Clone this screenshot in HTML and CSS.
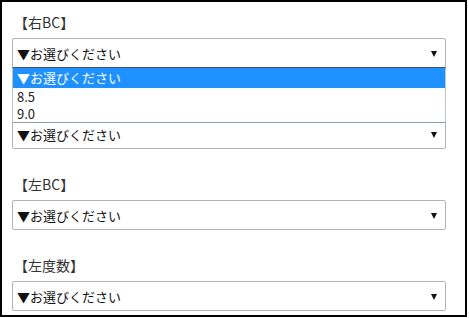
FILE: index.html
```html
<!DOCTYPE html>
<html lang="ja">
<head>
<meta charset="utf-8">
<link rel="stylesheet" href="styles.css">
</head>
<body>
<div class="frame">
  <div class="group">
    <div class="label">【右BC】</div>
    <div class="select-wrap">
      <div class="select"><span class="value">▼お選びください</span><span class="arrow"></span></div>
      <ul class="dropdown">
        <li class="opt selected">▼お選びください</li>
        <li class="opt">8.5</li>
        <li class="opt">9.0</li>
      </ul>
    </div>
  </div>
  <div class="group">
    <div class="label">【右度数】</div>
    <div class="select-wrap">
      <div class="select"><span class="value">▼お選びください</span><span class="arrow"></span></div>
    </div>
  </div>
  <div class="group">
    <div class="label">【左BC】</div>
    <div class="select-wrap">
      <div class="select"><span class="value">▼お選びください</span><span class="arrow"></span></div>
    </div>
  </div>
  <div class="group">
    <div class="label">【左度数】</div>
    <div class="select-wrap">
      <div class="select"><span class="value">▼お選びください</span><span class="arrow"></span></div>
    </div>
  </div>
</div>
</body>
</html>
```

FILE: styles.css
```css
html, body {
  margin: 0;
  padding: 0;
  background: #fff;
}
body {
  font-family: "Noto Sans CJK JP", "Noto Sans", sans-serif;
  color: #222;
}
.frame {
  box-sizing: border-box;
  width: 467px;
  height: 317px;
  border: 2px solid #000;
  padding: 10px 0 0 10px;
  display: flex;
  flex-direction: column;
  gap: 25px;
  overflow: hidden;
}
.group {
  display: flex;
  flex-direction: column;
  gap: 6px;
}
.label {
  height: 20px;
  line-height: 20px;
  font-size: 14px;
  color: #333;
  padding-left: 2px;
}
.select-wrap {
  position: relative;
  width: 434px;
}
.select {
  box-sizing: border-box;
  height: 30px;
  border: 1px solid #b4b4b4;
  border-radius: 2px;
  display: flex;
  align-items: center;
  justify-content: space-between;
  padding: 0 8px 0 4px;
  font-size: 13px;
  color: #111;
  background: #fff;
}
.arrow {
  width: 0;
  height: 0;
  border-left: 3.5px solid transparent;
  border-right: 3.5px solid transparent;
  border-top: 6px solid #111;
  margin-top: 1px;
}
.dropdown {
  position: absolute;
  left: 0;
  top: 29px;
  width: 434px;
  box-sizing: border-box;
  margin: 0;
  padding: 0;
  list-style: none;
  background: #fff;
  border: 1px solid #bcc4cc;
  border-top: 1px solid #4a5263;
  border-bottom: 1px solid #8e9cb4;
  z-index: 2;
  font-size: 13px;
}
.opt {
  height: 17px;
  line-height: 17px;
  padding-left: 4px;
  color: #222;
}
.opt.selected {
  height: 20px;
  line-height: 20px;
  background: #1e90ff;
  color: #fff;
}
```
